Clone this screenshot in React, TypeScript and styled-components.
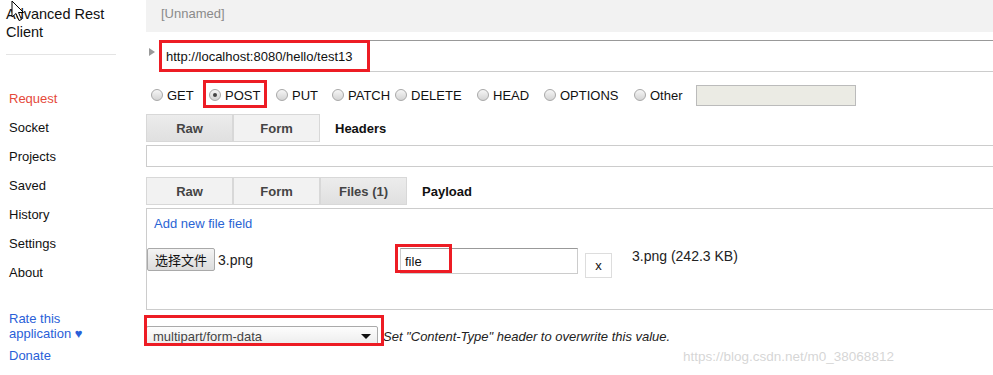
import React from "react";
import styled, { createGlobalStyle } from "styled-components";

const GlobalStyle = createGlobalStyle`
  body {
    margin: 0;
    background: #fff;
    font-family: "Liberation Sans", Arial, "Noto Sans CJK SC", sans-serif;
    font-size: 13px;
    color: #222;
  }
`;

const Page = styled.div`
  position: relative;
  display: flex;
  width: 993px;
  height: 375px;
  overflow: hidden;
`;

const Sidebar = styled.aside`
  width: 146px;
  flex: none;
  padding-left: 6px;
  box-sizing: border-box;
`;

const AppTitle = styled.div`
  margin-top: 5px;
  font-size: 14.5px;
  line-height: 18px;
  color: #111;
`;

const Divider = styled.div`
  margin-top: 13px;
  width: 110px;
  height: 1px;
  background: #e4e4e4;
`;

const Nav = styled.nav`
  display: flex;
  flex-direction: column;
  margin-top: 29px;
  padding-left: 3px;
`;

const NavItem = styled.a<{ $active?: boolean }>`
  line-height: 29px;
  color: ${(p) => (p.$active ? "#e5493a" : "#111")};
  text-decoration: none;
`;

const Extras = styled.div`
  display: flex;
  flex-direction: column;
  gap: 7px;
  margin-top: 24px;
  padding-left: 3px;
`;

const BlueLink = styled.a`
  line-height: 15px;
  color: #2a5fd8;
  text-decoration: none;
`;

const Main = styled.main`
  flex: 1;
  display: flex;
  flex-direction: column;
  min-width: 0;
`;

const NameBar = styled.div`
  height: 32px;
  padding-left: 15px;
  background: #f2f2f2;
  line-height: 28px;
  color: #8a8a8a;
`;

const UrlRow = styled.div`
  display: flex;
  margin-top: 8px;
  height: 32px;
`;

const Toggle = styled.span`
  width: 0;
  height: 0;
  margin: 8px 5px 0 3px;
  border-left: 6px solid #999;
  border-top: 4.5px solid transparent;
  border-bottom: 4.5px solid transparent;
`;

const UrlField = styled.div`
  position: relative;
  flex: 1;
  display: flex;
  align-items: center;
  padding-left: 6px;
  border-top: 1px solid #999;
  border-bottom: 1px solid #ccc;
  color: #111;
`;

const Mark = styled.span<{ $l: number; $t: number; $w: number; $h: number }>`
  position: absolute;
  left: ${(p) => p.$l}px;
  top: ${(p) => p.$t}px;
  width: ${(p) => p.$w}px;
  height: ${(p) => p.$h}px;
  border: 3px solid #ed1c24;
  box-sizing: border-box;
  pointer-events: none;
`;

const MethodRow = styled.div`
  display: flex;
  align-items: center;
  margin-top: 12px;
  height: 22px;
  padding-left: 5px;
`;

const Option = styled.label<{ $w: number }>`
  position: relative;
  display: flex;
  align-items: center;
  gap: 4px;
  width: ${(p) => p.$w}px;
  flex: none;
  color: #111;
`;

const Radio = styled.span<{ $checked?: boolean }>`
  position: relative;
  width: 12px;
  height: 12px;
  border-radius: 50%;
  border: 1px solid #a8a8a8;
  box-sizing: border-box;
  background: linear-gradient(#f6f6f6, #d4d4d4);
  &::after {
    content: "";
    display: ${(p) => (p.$checked ? "block" : "none")};
    position: absolute;
    left: 3px;
    top: 3px;
    width: 4px;
    height: 4px;
    border-radius: 50%;
    background: #444;
  }
`;

const OtherInput = styled.div`
  width: 160px;
  height: 21px;
  box-sizing: border-box;
  border: 1px solid #bbb;
  background: #ebebe4;
`;

const TabBar = styled.div<{ $top: number }>`
  display: flex;
  align-items: center;
  margin-top: ${(p) => p.$top}px;
  height: 28px;
`;

const Tab = styled.div<{ $active?: boolean }>`
  width: 87px;
  height: 28px;
  box-sizing: border-box;
  border: 1px solid #d8d8d8;
  display: flex;
  align-items: center;
  justify-content: center;
  font-weight: bold;
  color: #444;
  background: ${(p) =>
    p.$active ? "linear-gradient(#ececec, #e0e0e0)" : "#f2f2f2"};
`;

const TabLabel = styled.div`
  margin-left: 15px;
  font-weight: bold;
  color: #111;
`;

const HeadersBox = styled.div`
  margin-top: 3px;
  height: 22px;
  box-sizing: border-box;
  border: 1px solid #ccc;
  border-right: none;
`;

const PayloadBox = styled.div`
  margin-top: 3px;
  height: 102px;
  box-sizing: border-box;
  border: 1px solid #ccc;
  border-right: none;
`;

const AddLink = styled.a`
  display: block;
  margin: 7px 0 0 7px;
  line-height: 15px;
  color: #2a64d4;
  text-decoration: none;
`;

const FileRow = styled.div`
  display: grid;
  grid-template-columns: 253px auto auto 1fr;
  align-items: start;
  margin-top: 17px;
`;

const Picker = styled.div`
  display: flex;
  align-items: center;
  gap: 3px;
  font-size: 14px;
`;

const PickButton = styled.button`
  height: 23px;
  padding: 0 7px;
  border: 1px solid #a9a9a9;
  border-radius: 2px;
  background: linear-gradient(#f4f4f4, #dcdcdc);
  font-family: "Liberation Sans", "Noto Sans CJK SC", sans-serif;
  font-size: 13px;
  color: #111;
`;

const FieldWrap = styled.div`
  position: relative;
`;

const NameInput = styled.div`
  width: 178px;
  height: 26px;
  box-sizing: border-box;
  padding-left: 4px;
  display: flex;
  align-items: center;
  border: 1px solid #ccc;
  border-top-color: #999;
  color: #111;
`;

const RemoveButton = styled.div`
  margin: 5px 0 0 7px;
  width: 27px;
  height: 25px;
  box-sizing: border-box;
  border: 1px solid #ddd;
  display: flex;
  align-items: center;
  justify-content: center;
  color: #111;
`;

const FileInfo = styled.div`
  margin: 0 0 0 20px;
  line-height: 16px;
  font-size: 14px;
  color: #222;
`;

const EncodingRow = styled.div`
  display: flex;
  align-items: center;
  margin-top: 16px;
  height: 20px;
`;

const SelectWrap = styled.div`
  position: relative;
`;

const Select = styled.div`
  width: 232px;
  height: 20px;
  box-sizing: border-box;
  padding: 0 6px;
  display: flex;
  align-items: center;
  justify-content: space-between;
  border: 1px solid #aaa;
  border-radius: 2px;
  background: linear-gradient(#fdfdfd, #ececec);
  color: #444;
`;

const Caret = styled.span`
  width: 0;
  height: 0;
  border-top: 5px solid #111;
  border-left: 5px solid transparent;
  border-right: 5px solid transparent;
`;

const Hint = styled.div`
  margin-left: 5px;
  font-size: 13px;
  font-style: italic;
  color: #222;
`;

const Watermark = styled.div`
  position: absolute;
  left: 683px;
  top: 349px;
  font-size: 13.5px;
  color: rgba(200, 200, 200, 0.75);
  pointer-events: none;
`;

const Cursor = styled.svg`
  position: absolute;
  left: 11px;
  top: 0;
`;

const navItems = ["Request", "Socket", "Projects", "Saved", "History", "Settings", "About"];

const methods = [
  { name: "GET", w: 58 },
  { name: "POST", w: 67, checked: true },
  { name: "PUT", w: 56 },
  { name: "PATCH", w: 63 },
  { name: "DELETE", w: 82 },
  { name: "HEAD", w: 67 },
  { name: "OPTIONS", w: 90 },
  { name: "Other", w: 62 },
];

export default function App() {
  return (
    <>
      <GlobalStyle />
      <Page>
        <Sidebar>
          <AppTitle>
            Advanced Rest
            <br />
            Client
          </AppTitle>
          <Divider />
          <Nav>
            {navItems.map((n) => (
              <NavItem key={n} $active={n === "Request"}>
                {n}
              </NavItem>
            ))}
          </Nav>
          <Extras>
            <BlueLink>
              Rate this
              <br />
              application ♥
            </BlueLink>
            <BlueLink>Donate</BlueLink>
          </Extras>
        </Sidebar>

        <Main>
          <NameBar>[Unnamed]</NameBar>

          <UrlRow>
            <Toggle />
            <UrlField>
              http://localhost:8080/hello/test13
              <Mark $l={-1} $t={-1} $w={211} $h={32} />
            </UrlField>
          </UrlRow>

          <MethodRow>
            {methods.map((m) => (
              <Option key={m.name} $w={m.w}>
                <Radio $checked={m.checked} />
                {m.name}
                {m.checked && <Mark $l={-6} $t={-8} $w={64} $h={28} />}
              </Option>
            ))}
            <OtherInput />
          </MethodRow>

          <TabBar $top={8}>
            <Tab $active>Raw</Tab>
            <Tab>Form</Tab>
            <TabLabel>Headers</TabLabel>
          </TabBar>
          <HeadersBox />

          <TabBar $top={10}>
            <Tab>Raw</Tab>
            <Tab>Form</Tab>
            <Tab $active>Files (1)</Tab>
            <TabLabel>Payload</TabLabel>
          </TabBar>
          <PayloadBox>
            <AddLink>Add new file field</AddLink>
            <FileRow>
              <Picker>
                <PickButton>选择文件</PickButton>
                3.png
              </Picker>
              <FieldWrap>
                <NameInput>file</NameInput>
                <Mark $l={-5} $t={-4} $w={57} $h={29} />
              </FieldWrap>
              <RemoveButton>x</RemoveButton>
              <FileInfo>3.png (242.3 KB)</FileInfo>
            </FileRow>
          </PayloadBox>

          <EncodingRow>
            <SelectWrap>
              <Select>
                multipart/form-data
                <Caret />
              </Select>
              <Mark $l={-2} $t={-11} $w={240} $h={31} />
            </SelectWrap>
            <Hint>Set "Content-Type" header to overwrite this value.</Hint>
          </EncodingRow>
        </Main>

        <Watermark>https://blog.csdn.net/m0_38068812</Watermark>
        <Cursor width="14" height="22" viewBox="0 0 14 22">
          <path
            d="M1 1 L1 17 L5 13.5 L8 20.5 L10.5 19.5 L7.5 12.5 L12.5 12.5 Z"
            fill="#fff"
            stroke="#000"
            strokeWidth="1"
            strokeLinejoin="round"
          />
        </Cursor>
      </Page>
    </>
  );
}
